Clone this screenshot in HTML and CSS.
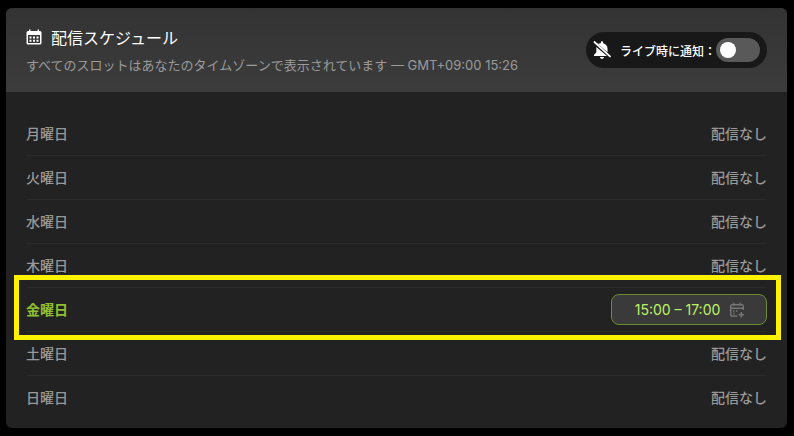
FILE: index.html
```html
<!DOCTYPE html>
<html lang="ja">
<head>
<meta charset="utf-8">
<title>配信スケジュール</title>
<link rel="stylesheet" href="styles.css">
</head>
<body>
<section class="card">
  <header class="head">
    <div class="head-text">
      <h2 class="title">
        <svg class="cal-icon" viewBox="0 0 16 16" width="16" height="16" aria-hidden="true">
          <path fill="#fff" fill-rule="evenodd" d="M3 0.5h1.5V2h7V0.5H13V2h1a1.5 1.5 0 0 1 1.500 1.500v10.500a1.500 1.500 0 0 1-1.500 1.500H2A1.500 1.500 0 0 1 .5 14V3.500A1.500 1.500 0 0 1 2 2h1zM2 6v8h12V6z"/>
          <path fill="#fff" d="M3.500 7.500h2v2h-2zM7 7.500h2v2H7zM10.500 7.500h2v2h-2zM3.500 10.700h2v2h-2zM7 10.700h2v2H7zM10.500 10.700h2v2h-2z"/>
        </svg>
        <span>配信スケジュール</span>
      </h2>
      <p class="sub">すべてのスロットはあなたのタイムゾーンで表示されています — GMT+09:00 15:26</p>
    </div>
    <div class="notify">
      <svg class="bell" viewBox="0 0 18 18" width="20" height="20" aria-hidden="true">
        <path fill="#fff" d="M9 1.200c.6 0 1 .4 1 1v.8c2.400.5 4 2.500 4 5v3l-9.400-8C5.500 3.700 6.600 3.200 8 3v-.8c0-.6.400-1 1-1zM3.900 6.300l9.600 8.200H1.800v-1.100l2.100-2.400zM7.200 15.300h3.600c0 1-.8 1.600-1.800 1.600s-1.800-.6-1.800-1.600z"/>
        <path stroke="#fff" stroke-width="1.600" stroke-linecap="round" d="M2.200 1.800l14 13"/>
      </svg>
      <span class="notify-label">ライブ時に通知：</span>
      <span class="toggle"><span class="knob"></span></span>
    </div>
  </header>
  <ul class="days">
    <li class="day"><span class="name">月曜日</span><span class="none">配信なし</span></li>
    <li class="day"><span class="name">火曜日</span><span class="none">配信なし</span></li>
    <li class="day"><span class="name">水曜日</span><span class="none">配信なし</span></li>
    <li class="day"><span class="name">木曜日</span><span class="none">配信なし</span></li>
    <li class="day today">
      <span class="name">金曜日</span>
      <span class="slot">
        <span>15:00 – 17:00</span>
        <svg class="add-icon" viewBox="0 0 16 16" width="16" height="16" aria-hidden="true">
          <path fill="none" stroke="#757575" stroke-width="1.500" d="M8 14H3a1.300 1.300 0 0 1-1.300-1.300V4A1.300 1.300 0 0 1 3 2.800h10A1.300 1.300 0 0 1 14.300 4v4M1.700 6.300h12.600M4.800 .8v3M11.200 .8v3M12.300 10v5.400M9.600 12.700h5.400"/>
          <path fill="#757575" d="M4 8.300h1.500v1.500H4zM7 8.300h1.500v1.500H7zM4 10.800h1.500v1.500H4z"/>
        </svg>
      </span>
    </li>
    <li class="day"><span class="name">土曜日</span><span class="none">配信なし</span></li>
    <li class="day"><span class="name">日曜日</span><span class="none">配信なし</span></li>
  </ul>
</section>
<div class="highlight"></div>
</body>
</html>
```
FILE: styles.css
```css
* { box-sizing: border-box; }
html, body { height: 100%; }
body {
  margin: 0;
  padding: 8px 7px 8px 6px;
  background: #000;
  font-family: Inter, "Noto Sans CJK JP", sans-serif;
  overflow: hidden;
}
.card {
  height: 420px;
  background: #222;
  border-radius: 6px;
  overflow: hidden;
}
.head {
  height: 84px;
  padding: 0 20px;
  display: flex;
  align-items: center;
  justify-content: space-between;
  background: linear-gradient(180deg, #333 0%, #3c3c3c 100%);
}
.head-text { display: flex; flex-direction: column; gap: 5px; }
.title {
  margin: 0;
  display: flex;
  align-items: center;
  gap: 9px;
  font-size: 16px;
  font-weight: 400;
  line-height: 24px;
  color: #fff;
}
.cal-icon { flex: none; margin-top: -1px; }
.sub {
  margin: 0;
  font-size: 13px;
  line-height: 20px;
  color: #9a9a9a;
}
.notify {
  height: 36px;
  padding: 0 7px 0 6px;
  display: flex;
  align-items: center;
  border-radius: 18px;
  background: #181818;
}
.bell { flex: none; margin-right: 8px; }
.notify-label {
  font-size: 12px;
  font-weight: 500;
  color: #fff;
  white-space: nowrap;
}
.toggle {
  width: 44px;
  height: 24px;
  padding: 4px;
  border-radius: 12px;
  background: #595959;
  display: flex;
}
.knob { width: 16px; height: 16px; border-radius: 50%; background: #fff; }
.days { list-style: none; margin: 0; padding: 20px 20px 0; }
.day {
  height: 44px;
  padding-bottom: 2px;
  display: flex;
  align-items: center;
  justify-content: space-between;
  border-bottom: 1px solid #2b2b2b;
  font-size: 14px;
  font-weight: 500;
  color: #999;
}
.day:last-child { border-bottom: 0; }
.today { padding-bottom: 0; }
.today .name { margin-bottom: 2px; color: #8fc031; font-weight: 700; }
.slot {
  width: 156px;
  height: 31px;
  padding-left: 2px;
  display: flex;
  align-items: center;
  justify-content: center;
  gap: 9px;
  border: 1px solid #6d8a30;
  border-radius: 8px;
  background: #3a3a3a;
  color: #bef264;
  font-size: 14px;
  font-weight: 400;
}
.add-icon { flex: none; }
.highlight {
  position: absolute;
  left: 14px;
  top: 275px;
  width: 767px;
  height: 65px;
  border: 5px solid #fff200;
  pointer-events: none;
}
```
